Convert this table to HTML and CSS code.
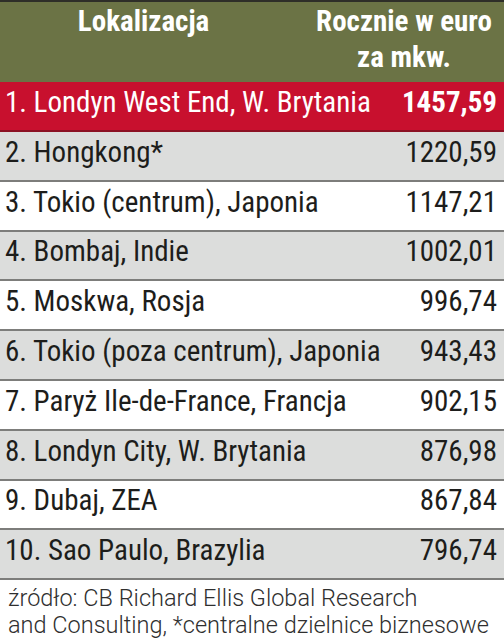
FILE: index.html
```html
<!DOCTYPE html>
<html lang="pl">

<head>
    <meta charset="UTF-8">
    <title>Czynsze biurowe</title>
    <link rel="stylesheet" href="styles.css">
</head>

<body>
    <div class="table">
        <div class="head">
            <div class="col-name">Lokalizacja</div>
            <div class="col-value">Rocznie w euro<br>za mkw.</div>
        </div>
        <div class="row top">
            <span>1. Londyn West End, W. Brytania</span>
            <span class="num">1457,59</span>
        </div>
        <div class="row grey">
            <span>2. Hongkong*</span>
            <span class="num">1220,59</span>
        </div>
        <div class="row">
            <span>3. Tokio (centrum), Japonia</span>
            <span class="num">1147,21</span>
        </div>
        <div class="row grey">
            <span>4. Bombaj, Indie</span>
            <span class="num">1002,01</span>
        </div>
        <div class="row">
            <span>5. Moskwa, Rosja</span>
            <span class="num">996,74</span>
        </div>
        <div class="row grey">
            <span>6. Tokio (poza centrum), Japonia</span>
            <span class="num">943,43</span>
        </div>
        <div class="row">
            <span>7. Paryż Ile-de-France, Francja</span>
            <span class="num">902,15</span>
        </div>
        <div class="row grey">
            <span>8. Londyn City, W. Brytania</span>
            <span class="num">876,98</span>
        </div>
        <div class="row">
            <span>9. Dubaj, ZEA</span>
            <span class="num">867,84</span>
        </div>
        <div class="row grey">
            <span>10. Sao Paulo, Brazylia</span>
            <span class="num">796,74</span>
        </div>
        <div class="source">
            źródło: CB Richard Ellis Global Research<br>
            and Consulting, *centralne dzielnice biznesowe
        </div>
    </div>
</body>

</html>
```
FILE: styles.css
```css
body {
    margin: 0;
    background-color: white;
}

.table {
    width: 504px;
    font-family: "Roboto Condensed", "Liberation Sans Narrow", sans-serif;
}

.head {
    display: flex;
    height: 80px;
    background-color: #6b7345;
    border-top: 2px solid #2e2e28;
    color: white;
    font-weight: bold;
    font-size: 29px;
    line-height: 36px;
}

.col-name {
    width: 287px;
    text-align: center;
    padding-top: 1px;
}

.col-value {
    flex: 1;
    text-align: center;
    padding-top: 1px;
    padding-left: 17px;
}

.row {
    box-sizing: border-box;
    display: flex;
    justify-content: space-between;
    align-items: center;
    height: 49.8px;
    padding: 0 7px 8px 5px;
    font-size: 29px;
    color: #1d1d1b;
    border-bottom: 2px solid #7d7d7b;
}

.row.grey {
    background-color: #dcdddc;
}

.row.top {
    height: 50px;
    background-color: #c8102e;
    color: white;
    border-bottom: 2px solid #8c1124;
}

.row.top .num {
    font-weight: bold;
}

.source {
    padding: 5px 8px 0;
    font-family: Roboto, "Liberation Sans", sans-serif;
    font-weight: 300;
    font-size: 23.5px;
    line-height: 27px;
    color: #2f2f2f;
    white-space: nowrap;
}
```
